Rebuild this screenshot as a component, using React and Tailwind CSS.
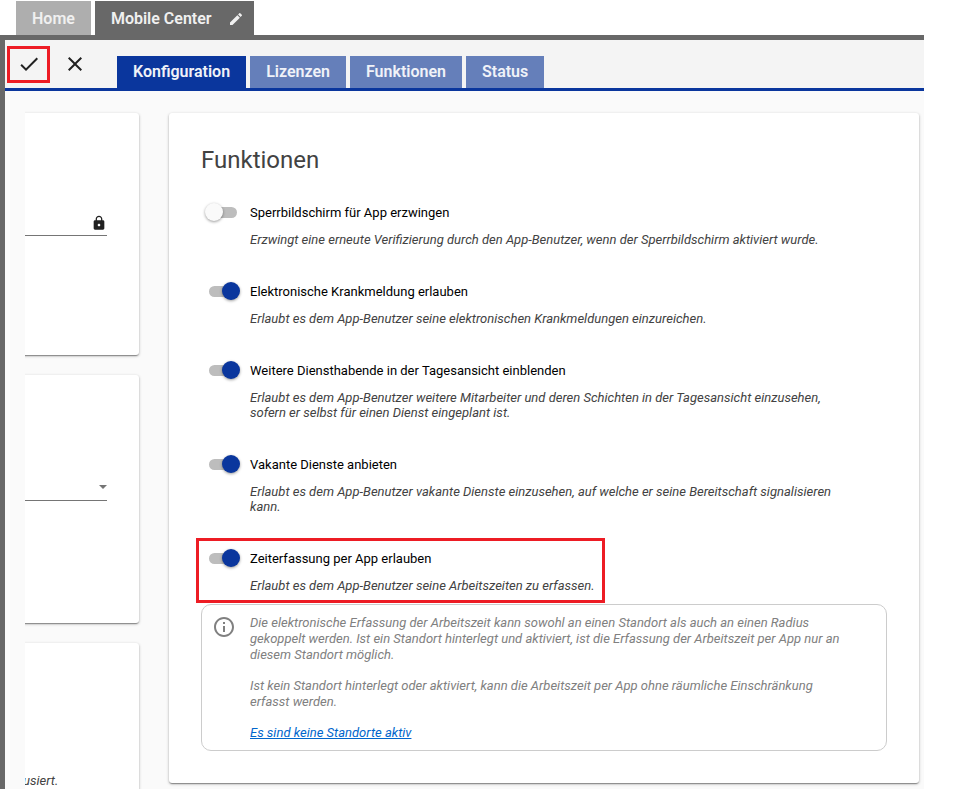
import { MdCheck, MdClose, MdEdit, MdInfoOutline, MdLock } from "react-icons/md";

const CARD =
  "bg-white rounded-[3px] shadow-[0_2px_1px_-1px_rgba(0,0,0,0.2),0_1px_1px_0_rgba(0,0,0,0.14),0_1px_3px_0_rgba(0,0,0,0.3)]";

const SUB_TABS = ["Konfiguration", "Lizenzen", "Funktionen", "Status"];

const SETTINGS = [
  {
    id: "sperrbildschirm",
    title: "Sperrbildschirm für App erzwingen",
    text: "Erzwingt eine erneute Verifizierung durch den App-Benutzer, wenn der Sperrbildschirm aktiviert wurde.",
    on: false,
  },
  {
    id: "krankmeldung",
    title: "Elektronische Krankmeldung erlauben",
    text: "Erlaubt es dem App-Benutzer seine elektronischen Krankmeldungen einzureichen.",
    on: true,
  },
  {
    id: "diensthabende",
    title: "Weitere Diensthabende in der Tagesansicht einblenden",
    text: "Erlaubt es dem App-Benutzer weitere Mitarbeiter und deren Schichten in der Tagesansicht einzusehen, sofern er selbst für einen Dienst eingeplant ist.",
    on: true,
  },
  {
    id: "vakante",
    title: "Vakante Dienste anbieten",
    text: "Erlaubt es dem App-Benutzer vakante Dienste einzusehen, auf welche er seine Bereitschaft signalisieren kann.",
    on: true,
  },
  {
    id: "zeiterfassung",
    title: "Zeiterfassung per App erlauben",
    text: "Erlaubt es dem App-Benutzer seine Arbeitszeiten zu erfassen.",
    on: true,
    marked: true,
  },
];

function WindowTabs() {
  return (
    <nav className="flex gap-1 pl-4 pt-px text-base font-semibold text-[#f0f0f0]">
      <button type="button" className="h-[34px] bg-[#aeaeae] px-4 pt-[2px]">
        Home
      </button>
      <button type="button" className="flex h-[34px] items-center gap-4 bg-[#686868] pl-4 pr-[10px] pt-[2px]">
        Mobile Center
        <MdEdit className="size-4" />
      </button>
    </nav>
  );
}

function Toolbar() {
  return (
    <header className="flex h-[51px] items-end border-b-3 border-[#0a369d] bg-[#f4f4f4] pl-[2px]">
      <button
        type="button"
        aria-label="Speichern"
        className="mb-[5px] flex h-[37px] w-[43px] items-center justify-center border-3 border-[#ed1c24] pb-px text-[#212121]"
      >
        <MdCheck className="size-6" />
      </button>
      <button
        type="button"
        aria-label="Abbrechen"
        className="mb-[6px] ml-[7px] flex h-9 w-9 items-center justify-center text-[#212121]"
      >
        <MdClose className="size-6" />
      </button>
      <nav className="ml-6 flex gap-1 text-base font-semibold text-[#f0f2f8]">
        {SUB_TABS.map((tab, i) => (
          <button
            key={tab}
            type="button"
            className={i === 0 ? "h-8 bg-[#0a369d] px-4" : "h-8 bg-[#657fba] px-4"}
          >
            {tab}
          </button>
        ))}
      </nav>
    </header>
  );
}

function SideCards() {
  return (
    <aside className="flex w-[129px] shrink-0 flex-col gap-5 overflow-hidden pr-[15px] pt-[22px]">
      <section className={`${CARD} -ml-2 h-[242px] pl-2 pr-8 pt-[99px]`}>
        <div className="flex h-6 items-center border-b border-[#757575] pb-[2px]">
          <input type="text" readOnly aria-label="Gesperrtes Feld" className="min-w-0 flex-1 outline-none" />
          <MdLock className="size-4 shrink-0 text-[#212121]" />
        </div>
      </section>
      <section className={`${CARD} -ml-2 h-[248px] pl-2 pr-8 pt-[102px]`}>
        <div className="flex h-6 items-center border-b border-[#757575] pb-[3px]">
          <select aria-label="Auswahl" className="min-w-0 flex-1 appearance-none outline-none" />
          <svg viewBox="0 0 8 4" className="h-1 w-2 shrink-0 fill-[#757575]">
            <path d="M0 0h8L4 4z" />
          </svg>
        </div>
      </section>
      <section className={`${CARD} -mb-2 -ml-2 flex-1 pl-[6px] pt-[130px]`}>
        <p className="text-[13px] italic leading-[16px] text-[#424242]">usiert.</p>
      </section>
    </aside>
  );
}

function Setting({ id, title, text, on, marked }) {
  return (
    <div className="relative flex gap-[13px] pl-2 pr-8">
      <input
        id={id}
        type="checkbox"
        role="switch"
        defaultChecked={on}
        className="relative mt-[5px] h-[11px] w-7 shrink-0 appearance-none rounded-full bg-[#bdbdbd] before:absolute before:-left-1 before:-top-1 before:size-[18px] before:rounded-full before:bg-[#fafafa] before:shadow-[0_1px_3px_rgba(0,0,0,0.4)] checked:before:left-[13px] checked:before:bg-[#0a369d]"
      />
      <div className="flex flex-col gap-2">
        <label htmlFor={id} className="leading-[22px] text-black">
          {title}
        </label>
        <p className="italic leading-[15px] text-[#424242]">{text}</p>
      </div>
      {marked && (
        <span className="pointer-events-none absolute -bottom-[10px] -left-[5px] -top-[10px] w-[409px] border-3 border-[#ed1c24]" />
      )}
    </div>
  );
}

function LocationHint() {
  return (
    <div className="mt-[11px] flex gap-[14px] rounded-[10px] border border-[#cccccc] pb-[9px] pl-[10px] pr-8 pt-[10px] text-[#808080]">
      <MdInfoOutline className="size-6 shrink-0" />
      <div className="flex flex-col items-start gap-[15px] italic leading-[16px]">
        <p>
          Die elektronische Erfassung der Arbeitszeit kann sowohl an einen Standort als auch an einen Radius
          gekoppelt werden. Ist ein Standort hinterlegt und aktiviert, ist die Erfassung der Arbeitszeit per App
          nur an diesem Standort möglich.
        </p>
        <p>
          Ist kein Standort hinterlegt oder aktiviert, kann die Arbeitszeit per App ohne räumliche Einschränkung
          erfasst werden.
        </p>
        <a href="#standorte" className="text-[#0066cc] underline">
          Es sind keine Standorte aktiv
        </a>
      </div>
    </div>
  );
}

export default function App() {
  return (
    <div className="flex h-screen flex-col overflow-hidden bg-white pr-[30px] font-[Roboto,sans-serif]">
      <WindowTabs />
      <div className="flex min-h-0 flex-1 flex-col border-l-5 border-t-5 border-[#686868] bg-[#fafafa]">
        <Toolbar />
        <main className="flex min-h-0 flex-1 pl-5 pr-[5px]">
          <SideCards />
          <div className="min-w-0 flex-1 pl-[15px] pt-[22px]">
            <section className={`${CARD} px-8 pb-8 pt-[31px] text-[13px]`}>
              <h1 className="text-2xl text-[#424242]">Funktionen</h1>
              <div className="mt-[26px] flex flex-col gap-[34px]">
                {SETTINGS.map((setting) => (
                  <Setting key={setting.id} {...setting} />
                ))}
              </div>
              <LocationHint />
            </section>
          </div>
        </main>
      </div>
    </div>
  );
}
